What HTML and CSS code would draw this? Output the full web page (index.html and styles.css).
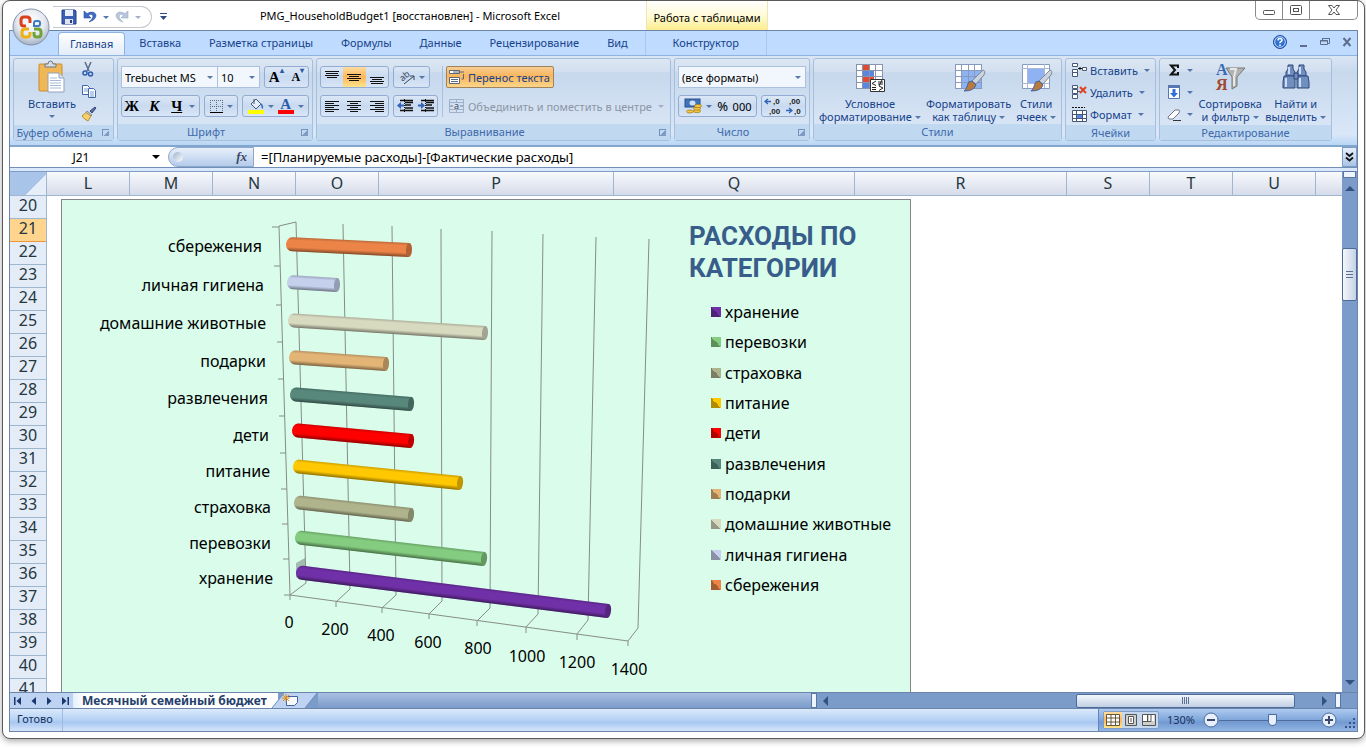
FILE: index.html
```html
<!DOCTYPE html>
<html lang="ru">
<head>
    <meta charset="UTF-8">
    <meta name="viewport" content="width=device-width, initial-scale=1.0">
    <title>PMG_HouseholdBudget1 - Microsoft Excel</title>
    <link rel="stylesheet" href="styles.css">
</head>
<body>

<div class="window">
    <button class="office" aria-label="Office">
        <svg width="38" height="38" viewBox="0 0 38 38">
            <defs>
                <radialGradient id="orb" cx="50%" cy="35%" r="65%">
                    <stop offset="0" stop-color="#fff"/>
                    <stop offset="0.6" stop-color="#e4e9f0"/>
                    <stop offset="1" stop-color="#a3b0c4"/>
                </radialGradient>
            </defs>
            <circle cx="19" cy="19" r="18" fill="url(#orb)" stroke="#8592a8"/>
            <g fill="none" stroke-width="3">
                <path d="M18 15v-3q0-3-3-3h-3q-3 0-3 3v3q0 3 3 3h2" stroke="#d8411c"/>
                <path d="M17 21h-4q-3 0-3 3v2q0 3 3 3h2q3 0 3-3v-2" stroke="#eeb111"/>
                <path d="M22 24v2q0 3 3 3h1q3 0 3-3v-2q0-3-3-3h-4" stroke="#6fa33a"/>
                <path d="M22 18h4q2 0 2-2v-1q0-2-2-2h-2q-2 0-2 2z" stroke="#3d7cc0" stroke-width="2"/>
            </g>
        </svg>
    </button>

    <header class="title-bar">
        <div class="quick">
            <button aria-label="Сохранить"><svg width="16" height="16" viewBox="0 0 16 16"><path d="M1 1h13l1 1v13H1z" fill="#3b5fb5" stroke="#243f87"/><path d="M4 1h8v6H4z" fill="#e8eefb"/><path d="M4 10h8v5H4z" fill="#dfe4ee"/><path d="M9 11h2v3H9z" fill="#243f87"/></svg></button>
            <button aria-label="Отменить"><svg width="14" height="14" viewBox="0 0 14 14"><path d="M1 1v7h7L5.500 5.500Q9 3 10 6q0 3-4 6 7-2 7-7Q11 0 4 3.500z" fill="#3d6cc7" stroke="#2a4f9e" stroke-width=".6"/></svg></button>
            <i class="arrow"></i>
            <button aria-label="Вернуть"><svg width="14" height="14" viewBox="0 0 14 14"><path d="M13 1v7H6l2.500-2.500Q5 3 4 6q0 3 4 6-7-2-7-7Q3 0 10 3.500z" fill="#b9c6dc" stroke="#98a9c6" stroke-width=".6"/></svg></button>
            <i class="arrow pale"></i>
        </div>
        <button class="quick-more" aria-label="Настройка панели"><svg width="7" height="7" viewBox="0 0 7 7"><path d="M0 .5h7" stroke="#2d4b80"/><path d="M0 3h7L3.500 7z" fill="#2d4b80"/></svg></button>
        <h1>PMG_HouseholdBudget1 [восстановлен] - Microsoft Excel</h1>
        <div class="context-title">Работа с таблицами</div>
        <div class="caption">
            <button aria-label="Свернуть"><svg width="14" height="12" viewBox="0 0 14 12"><rect x="1.500" y="6.500" width="11" height="4" rx="1" fill="#fff" stroke="#555"/></svg></button>
            <button aria-label="Развернуть"><svg width="14" height="12" viewBox="0 0 14 12"><rect x="1.500" y="1.500" width="11" height="9" rx="1" fill="#fff" stroke="#555"/><rect x="4.500" y="4.500" width="5" height="3" fill="#fff" stroke="#555"/></svg></button>
            <button aria-label="Закрыть"><svg width="14" height="12" viewBox="0 0 14 12"><path d="M1.500 1.500h3.500l2 2.500 2-2.500h3.500L9 6l3.500 4.500H9L7 8l-2 2.500H1.500L5 6z" fill="#fff" stroke="#555"/></svg></button>
        </div>
    </header>

    <div class="app">
        <nav class="tabs">
            <a href="#" class="tab active">Главная</a>
            <a href="#" class="tab">Вставка</a>
            <a href="#" class="tab">Разметка страницы</a>
            <a href="#" class="tab">Формулы</a>
            <a href="#" class="tab">Данные</a>
            <a href="#" class="tab">Рецензирование</a>
            <a href="#" class="tab">Вид</a>
            <a href="#" class="tab context">Конструктор</a>
            <div class="doc-buttons">
                <button aria-label="Справка"><svg width="14" height="14" viewBox="0 0 14 14"><circle cx="7" cy="7" r="6.500" fill="#2f6fd0" stroke="#1e4f9e"/><circle cx="7" cy="7" r="5.300" fill="none" stroke="#bcd8fb"/><path d="M5 5.500q0-2 2-2t2 1.800q0 1-2 2v1" fill="none" stroke="#fff" stroke-width="1.500"/><path d="M6.200 9.500h1.600V11H6.200z" fill="#fff"/></svg></button>
                <button aria-label="Свернуть окно"><svg width="9" height="12" viewBox="0 0 9 12"><path d="M1 10h7" stroke="#5d6f8c" stroke-width="2"/></svg></button>
                <button aria-label="Восстановить окно"><svg width="10" height="10" viewBox="0 0 10 10"><path d="M2.500 3V1.500h7v5H8" fill="none" stroke="#5d6f8c"/><path d="M.5 3.500h7v4h-7z" fill="none" stroke="#5d6f8c"/><path d="M0 4h8M2 1.500h8" stroke="#5d6f8c"/></svg></button>
                <button aria-label="Закрыть книгу"><svg width="10" height="10" viewBox="0 0 10 10"><path d="M1.500 1l7 8M8.500 1l-7 8" stroke="#5d6f8c" stroke-width="2"/></svg></button>
            </div>
        </nav>

        <div class="ribbon">
            <section class="group g-clip">
                <div class="group-body">
                    <button class="big">
                        <svg width="28" height="32" viewBox="0 0 28 32"><rect x="1" y="3" width="23" height="27" rx="1" fill="#efb755" stroke="#c98c2c"/><path d="M7 6V3h3q0-3 2.500-3T15 3h3v3z" fill="#d8dde4" stroke="#6c7685"/><path d="M10 12h11l5 5v14H10z" fill="#fff" stroke="#8fa1bd"/><path d="M21 12v5h5" fill="#dbe5f3" stroke="#8fa1bd"/><path d="M12 17h7M12 19.500h11M12 22h11M12 24.500h11M12 27h11" stroke="#a9bad5"/></svg>
                        <span>Вставить</span>
                        <i class="arrow"></i>
                    </button>
                    <div class="stack">
                        <button aria-label="Вырезать"><svg width="14" height="16" viewBox="0 0 14 16"><path d="M4 0l4 9M10 0L6 9" stroke="#5b6c8c" stroke-width="1.500"/><circle cx="4" cy="11" r="2" fill="none" stroke="#2b5cae" stroke-width="1.500"/><circle cx="9.500" cy="12" r="2" fill="none" stroke="#2b5cae" stroke-width="1.500"/></svg></button>
                        <button aria-label="Копировать"><svg width="16" height="16" viewBox="0 0 16 16"><path d="M1.500 1.500h5l2 2v7h-7z" fill="#fff" stroke="#3d66ae"/><path d="M3 5h4M3 7h4" stroke="#7f9ccf"/><path d="M7.500 4.500h5l2 2v7h-7z" fill="#fff" stroke="#3d66ae"/><path d="M9 8h4M9 10h4M9 12h4" stroke="#7f9ccf"/></svg></button>
                        <button aria-label="Формат по образцу"><svg width="16" height="16" viewBox="0 0 16 16"><path d="M9 5l5-4 1 1-4 5z" fill="#5b6fa3" stroke="#37497c"/><path d="M6 5l5 4-1 1-5-3z" fill="#c7cfde" stroke="#7b88a2"/><path d="M5 6.500L10 10l-3 5q-3-1-6-5z" fill="#f6d16b" stroke="#bb8f2e"/></svg></button>
                    </div>
                </div>
                <h2>Буфер обмена</h2><i class="launch"></i>
            </section>

            <section class="group g-font">
                <div class="group-body rows">
                    <div class="line">
                        <div class="joined">
                            <select class="font-name" aria-label="Шрифт"><option>Trebuchet MS</option></select>
                            <select class="font-size" aria-label="Размер шрифта"><option>10</option></select>
                        </div>
                        <div class="btns wide">
                            <button class="serif" aria-label="Увеличить размер">A<sup>▴</sup></button>
                            <button class="serif small" aria-label="Уменьшить размер">A<sup>▾</sup></button>
                        </div>
                    </div>
                    <div class="line">
                        <div class="btns biu">
                            <button class="serif">Ж</button>
                            <button class="serif"><em>К</em></button>
                            <button class="serif"><u>Ч</u></button>
                            <i class="arrow"></i>
                        </div>
                        <div class="btns">
                            <button aria-label="Границы"><svg width="15" height="15" viewBox="0 0 15 15"><path d="M1 1.500h13M1 7.500h13M1.500 1v12M7.500 1v12M13.500 1v12" stroke="#5e6b80" stroke-dasharray="1 1"/><path d="M1 13.500h13" stroke="#000"/></svg></button>
                            <i class="arrow"></i>
                        </div>
                        <div class="btns wide">
                            <button aria-label="Цвет заливки"><svg width="16" height="16" viewBox="0 0 16 16"><path d="M3 6l5-5 5 5-5 5z" fill="#e7edf7" stroke="#49597a"/><path d="M6 1v5" stroke="#49597a"/><path d="M12 5q4 1 3 6-2-1-2-4z" fill="#3c74c9"/><path d="M0 12h16v4H0z" fill="#ff0"/></svg></button>
                            <i class="arrow"></i>
                            <button aria-label="Цвет текста" class="serif color-a">A</button>
                            <i class="arrow"></i>
                        </div>
                    </div>
                </div>
                <h2>Шрифт</h2><i class="launch"></i>
            </section>

            <section class="group g-align">
                <div class="group-body">
                    <div class="rows">
                        <div class="line">
                            <div class="btns trio">
                                <button aria-label="По верхнему краю"><svg width="16" height="16" viewBox="0 0 16 16"><path d="M1 2.500h14M2 4.500h12M1 6.500h14M3 8.500h10" stroke="#111"/></svg></button>
                                <button class="on" aria-label="По середине"><svg width="16" height="16" viewBox="0 0 16 16"><path d="M1 5.500h14M3 7.500h10M1 9.500h14M3 11.500h10" stroke="#111"/></svg></button>
                                <button aria-label="По нижнему краю"><svg width="16" height="16" viewBox="0 0 16 16"><path d="M1 8.500h14M3 10.500h10M1 12.500h14M2 14.500h12" stroke="#111"/></svg></button>
                            </div>
                            <div class="btns">
                                <button aria-label="Ориентация"><svg width="18" height="16" viewBox="0 0 18 16"><text x="2" y="10" class="glyph" transform="rotate(-40 7 8)">ab</text><path d="M6 15L16 7M16 7v4M16 7h-4" fill="none" stroke="#39465c"/></svg></button>
                                <i class="arrow"></i>
                            </div>
                        </div>
                        <div class="line">
                            <div class="btns trio">
                                <button aria-label="По левому краю"><svg width="16" height="16" viewBox="0 0 16 16"><path d="M1 3.500h14M1 5.500h9M1 7.500h14M1 9.500h9M1 11.500h14M1 13.500h9" stroke="#111"/></svg></button>
                                <button aria-label="По центру"><svg width="16" height="16" viewBox="0 0 16 16"><path d="M1 3.500h14M4 5.500h8M1 7.500h14M4 9.500h8M1 11.500h14M4 13.500h8" stroke="#111"/></svg></button>
                                <button aria-label="По правому краю"><svg width="16" height="16" viewBox="0 0 16 16"><path d="M1 3.500h14M6 5.500h9M1 7.500h14M6 9.500h9M1 11.500h14M6 13.500h9" stroke="#111"/></svg></button>
                            </div>
                            <div class="btns duo">
                                <button aria-label="Уменьшить отступ"><svg width="16" height="16" viewBox="0 0 16 16"><path d="M3 2.500h13M8 4.500h8M8 7h6M3 12.500h13M8 10h8" stroke="#111" stroke-width="1.500"/><path d="M7.500 1v14" stroke="#111" stroke-dasharray="1 1"/><path d="M0 7.500L4 4v2.500h3v2H4V11z" fill="#3163b8"/></svg></button>
                                <button aria-label="Увеличить отступ"><svg width="16" height="16" viewBox="0 0 16 16"><path d="M3 2.500h13M8 4.500h8M8 7h6M3 12.500h13M8 10h8" stroke="#111" stroke-width="1.500"/><path d="M7.500 1v14" stroke="#111" stroke-dasharray="1 1"/><path d="M7 7.500L3 4v2.500H0v2h3V11z" fill="#3163b8"/></svg></button>
                            </div>
                        </div>
                    </div>
                    <div class="rows split">
                        <button class="labeled wrap"><svg width="17" height="16" viewBox="0 0 17 16"><path d="M1.500 1.500h10v3h-10zM1.500 8.500h10v6h-10z" fill="#fff" stroke="#5d6677"/><path d="M3 10.500h7M3 12.500h7M5 3h11M15.500 5v5h-2" fill="none" stroke="#5d6677"/></svg>Перенос текста</button>
                        <button class="labeled" disabled><svg width="17" height="16" viewBox="0 0 17 16"><path d="M1.500 1.500h14v13h-14zM1.500 4.500h14M1.500 11.500h14M8.500 1v3M8.500 12v3" fill="none" stroke="#9fb0c8"/><path d="M2 8h3M12 8h3" stroke="#6c7c95"/><text x="6" y="11" class="glyph">a</text></svg>Объединить и поместить в центре<i class="arrow pale"></i></button>
                    </div>
                </div>
                <h2>Выравнивание</h2><i class="launch"></i>
            </section>

            <section class="group g-num">
                <div class="group-body rows">
                    <div class="line"><select class="format" aria-label="Числовой формат"><option>(все форматы)</option></select></div>
                    <div class="line">
                        <div class="btns money">
                            <button aria-label="Денежный формат"><svg width="18" height="16" viewBox="0 0 18 16"><rect x="1" y="1" width="15" height="8" fill="#3f74bd" stroke="#2a4f8b"/><ellipse cx="8.500" cy="5" rx="3" ry="2.500" fill="#cfe0f5"/><g fill="#f4c542" stroke="#9d7416" stroke-width=".7"><ellipse cx="13" cy="13" rx="3.500" ry="1.700"/><ellipse cx="13" cy="10.500" rx="3.500" ry="1.700"/><ellipse cx="14" cy="8" rx="3.500" ry="1.700"/><ellipse cx="6" cy="13.500" rx="3.500" ry="1.500"/></g></svg></button>
                            <i class="arrow"></i>
                            <button class="percent">%</button>
                            <button class="zeros">000</button>
                        </div>
                        <div class="btns duo">
                            <button aria-label="Увеличить разрядность"><svg width="18" height="20" viewBox="0 0 18 20"><text x="9" y="8" class="digits">,0</text><text x="5" y="18" class="digits">,00</text><path d="M1 5.500h6M4 3L1 5.500 4 8" fill="none" stroke="#2d63b8" stroke-width="1.300"/></svg></button>
                            <button aria-label="Уменьшить разрядность"><svg width="18" height="20" viewBox="0 0 18 20"><text x="4" y="8" class="digits">,00</text><text x="9" y="18" class="digits">,0</text><path d="M1 14.500h6M4 12l3 2.500L4 17" fill="none" stroke="#2d63b8" stroke-width="1.300"/></svg></button>
                        </div>
                    </div>
                </div>
                <h2>Число</h2><i class="launch"></i>
            </section>

            <section class="group g-styles">
                <div class="group-body">
                    <button class="big">
                        <svg width="32" height="32" viewBox="0 0 32 32"><path d="M2 3h26v25H2z" fill="#fff"/><path d="M9 3h6v6H9zM9 15h11v6H9z" fill="#e2492f"/><path d="M9 9h11v6H9zM9 21h6v6H9z" fill="#5a86e0"/><path d="M2.500 3v25M8.500 3v25M15.500 3v25M21.500 3v25M28.500 3v25M2 3.500h27M2 9.500h27M2 15.500h27M2 21.500h27M2 27.500h27" stroke="#8794ad" fill="none"/><path d="M16.500 18.500h14v12h-14z" fill="#fff" stroke="#333"/><path d="M22 20l-4 2.500 4 2M18 26.500h4M18 28.500h4M24 21h5M24 23h5M28 19l-3 6M25 25l4 2-4 2.500" fill="none" stroke="#222"/></svg>
                        <span>Условное<br>форматирование<i class="arrow"></i></span>
                    </button>
                    <button class="big">
                        <svg width="32" height="32" viewBox="0 0 32 32"><path d="M2 3h26v24H2z" fill="#fff"/><path d="M9 9h19v18H9z" fill="#8fb2f2"/><path d="M2.500 3v24M8.500 3v24M15.500 3v24M21.500 3v24M28.500 3v24M2 3.500h27M2 9.500h27M2 15.500h27M2 21.500h27M2 27.500h27" stroke="#8799bd" fill="none"/><path d="M30 9q3 1 1 5l-8 9-4-3z" fill="#cdd3de" stroke="#7c889c"/><path d="M19 20l4 4q-2 6-12 6 3-2 3.500-6t4.500-4z" fill="#b97a3c" stroke="#3d64a5"/></svg>
                        <span>Форматировать<br>как таблицу<i class="arrow"></i></span>
                    </button>
                    <button class="big">
                        <svg width="32" height="32" viewBox="0 0 32 32"><path d="M2.500 3.500h27v24h-27z" fill="#fff" stroke="#8799bd"/><path d="M7 8h18v15H7z" fill="#8fb2f2"/><path d="M7.500 3v24M24.500 3v24M2 7.500h27M2 22.500h27" stroke="#a9b9d6"/><path d="M30 9q3 1 1 5l-8 9-4-3z" fill="#cdd3de" stroke="#7c889c"/><path d="M19 20l4 4q-2 6-12 6 3-2 3.500-6t4.500-4z" fill="#b97a3c" stroke="#3d64a5"/></svg>
                        <span>Стили<br>ячеек<i class="arrow"></i></span>
                    </button>
                </div>
                <h2>Стили</h2>
            </section>

            <section class="group g-cells">
                <div class="group-body stack">
                    <button class="labeled"><svg width="16" height="16" viewBox="0 0 16 16"><path d="M1.500 1.500h5v3h-5zM1.500 7.500h5v3h-5zM1.500 10.500h5v4h-5zM11.500 5.500h4v3h-4z" fill="#fff" stroke="#46587a"/><path d="M7 6.500h4M9 5v3" stroke="#111"/></svg>Вставить<i class="arrow"></i></button>
                    <button class="labeled"><svg width="16" height="16" viewBox="0 0 16 16"><path d="M1.500 1.500h5v3h-5zM1.500 5.500h5v4h-5zM1.500 10.500h5v4h-5z" fill="#fff" stroke="#46587a"/><path d="M6 7.500h3" stroke="#46587a"/><path d="M9 3l6 6M15 3L9 9" stroke="#e2401f" stroke-width="2"/></svg>Удалить<i class="arrow"></i></button>
                    <button class="labeled"><svg width="16" height="16" viewBox="0 0 16 16"><path d="M1 1.500h13" stroke="#111" stroke-dasharray="2 1"/><path d="M1.500 4.500h14v11h-14z" fill="#fff"/><path d="M6 9h5v3H6z" fill="#5a86e0"/><path d="M1.500 4.500h14v11h-14zM5.500 4v11M11.500 4v11M1 8.500h14M1 12.500h14" fill="none" stroke="#46587a"/></svg>Формат<i class="arrow"></i></button>
                </div>
                <h2>Ячейки</h2>
            </section>

            <section class="group g-edit">
                <div class="group-body">
                    <div class="stack">
                        <button class="labeled" aria-label="Сумма"><svg width="14" height="16" viewBox="0 0 14 16"><path d="M11 6V3.500H4L8 8l-4 4.500h7V10" fill="none" stroke="#111" stroke-width="2"/></svg><i class="arrow"></i></button>
                        <button class="labeled" aria-label="Заполнить"><svg width="14" height="16" viewBox="0 0 14 16"><path d="M1.500 1.500h11v13h-11z" fill="#fff" stroke="#5876b4"/><path d="M1 1h12v3H1z" fill="#5876b4"/><path d="M5.500 5h3v4H11l-4 4.500L3 9h2.500z" fill="#2f6fd8"/></svg><i class="arrow"></i></button>
                        <button class="labeled" aria-label="Очистить"><svg width="14" height="16" viewBox="0 0 14 16"><path d="M1 11l7-7h4q1 1 0 3l-6 6H2q-1-1-1-2z" fill="#fff" stroke="#6a7486"/><path d="M6 14.500h8" stroke="#333"/></svg><i class="arrow"></i></button>
                    </div>
                    <button class="big">
                        <svg width="32" height="32" viewBox="0 0 32 32"><path d="M12 7h19l-8 9v9l-5 3V16z" fill="#b3b3b3" stroke="#777"/><path d="M16 8h6l-2 8v9" fill="none" stroke="#e8e8e8" stroke-width="2"/><text x="2" y="14" class="sort-a">А</text><text x="2" y="29" class="sort-z">Я</text></svg>
                        <span>Сортировка<br>и фильтр<i class="arrow"></i></span>
                    </button>
                    <button class="big">
                        <svg width="32" height="32" viewBox="0 0 32 32"><g fill="#6f8fc0" stroke="#2e4778"><path d="M8 4h5v4l2 3v4H6v-4l2-3zM19 4h5v4l2 3v4h-9v-4l2-3z"/><path d="M4 15h11v12H3v-6zM17 15h11l1 6v6H17z"/><path d="M14 12h4v6h-4z"/></g><path d="M6 17v9M20 17v9M9 6v7M20 6v7" stroke="#cddcf3" stroke-width="2"/></svg>
                        <span>Найти и<br>выделить<i class="arrow"></i></span>
                    </button>
                </div>
                <h2>Редактирование</h2>
            </section>
        </div>

        <div class="formula-bar">
            <div class="name-box"><input type="text" value="J21" aria-label="Имя"><i class="arrow dark"></i></div>
            <button class="fx" aria-label="Вставить функцию"><span class="knob"></span><span><i>f</i>x</span></button>
            <input class="formula" type="text" value="=[Планируемые расходы]-[Фактические расходы]" aria-label="Строка формул">
            <button class="expand" aria-label="Развернуть строку формул"><svg width="9" height="10" viewBox="0 0 9 10"><path d="M1 1l3.500 3L8 1M1 5.500l3.500 3 3.500-3" fill="none" stroke="#111" stroke-width="1.800"/></svg></button>
        </div>

        <main class="workbook">
            <div class="sheet">
                <div class="col-heads">
                    <span class="corner"></span>
                    <span class="c-std">L</span><span class="c-std">M</span><span class="c-std">N</span><span class="c-std">O</span>
                    <span class="c-p">P</span><span class="c-q">Q</span><span class="c-r">R</span>
                    <span class="c-std">S</span><span class="c-std">T</span><span class="c-std">U</span><span class="c-rest"></span>
                </div>
                <div class="cells">
                    <div class="row-heads" id="rowHeads"></div>
                    <div class="chart">
                        <svg class="plot" width="620" height="494" viewBox="62 200 620 494">
                            <defs>
                                <linearGradient id="shade" x1="0" y1="0" x2="0" y2="1">
                                    <stop offset="0" stop-color="#000" stop-opacity=".2"/>
                                    <stop offset=".2" stop-color="#000" stop-opacity="0"/>
                                    <stop offset=".7" stop-color="#000" stop-opacity="0"/>
                                    <stop offset="1" stop-color="#000" stop-opacity=".45"/>
                                </linearGradient>
                            </defs>
                            <!-- walls, floor and grid -->
                            <g class="grid">
                                <path d="M290 600V595L279 226L296 222L306 583L290 595L628 641"/>
                                <path d="M343 224L350 589L336 602V607"/>
                                <path d="M392 226L396 595L382 608V613"/>
                                <path d="M441 229L442 601L429 614V619"/>
                                <path d="M492 231L490 608L477 621V626"/>
                                <path d="M543 234L538 614L526 627V633"/>
                                <path d="M596 237L588 620L577 634V640"/>
                                <path d="M649 239L638 628L628 641V646"/>
                                <path d="M272 227h7M274 266h6M276 305h5M277 342h6M278 379h6M279 416h6M280 453h6M281 489h6M282 524h6M283 559h6M284 595h6"/>
                            </g>
                            <path d="M296 563l9-5v10l-9 10z" fill="#000" opacity=".25"/>
                            <g id="bars"></g>
                            <g class="axis">
                                <text x="289" y="628">0</text>
                                <text x="335" y="635">200</text>
                                <text x="381" y="641">400</text>
                                <text x="428" y="648">600</text>
                                <text x="478" y="654">800</text>
                                <text x="527" y="662">1000</text>
                                <text x="577" y="668">1200</text>
                                <text x="629" y="675">1400</text>
                            </g>
                        </svg>
                        <div class="chart-side">
                            <h2>РАСХОДЫ ПО КАТЕГОРИИ</h2>
                            <ul class="legend" id="legend"></ul>
                        </div>
                    </div>
                </div>
            </div>
            <div class="vscroll">
                <span class="split-box"></span>
                <i class="tri up"></i>
                <span class="vthumb"></span>
                <i class="tri down"></i>
            </div>
        </main>

        <div class="sheet-bar">
            <div class="sheet-nav">
                <button aria-label="Первый лист"><svg width="8" height="8" viewBox="0 0 8 8"><path d="M0 0h1.500v8H0zM7 0v8L2.500 4z"/></svg></button>
                <button aria-label="Предыдущий лист"><svg width="8" height="8" viewBox="0 0 8 8"><path d="M6 0v8L1.500 4z"/></svg></button>
                <button aria-label="Следующий лист"><svg width="8" height="8" viewBox="0 0 8 8"><path d="M2 0v8l4.500-4z"/></svg></button>
                <button aria-label="Последний лист"><svg width="8" height="8" viewBox="0 0 8 8"><path d="M6.500 0H8v8H6.500zM1 0v8l4.500-4z"/></svg></button>
            </div>
            <a href="#" class="sheet-tab">Месячный семейный бюджет</a>
            <button class="new-sheet" aria-label="Вставить лист"><svg width="46" height="15" viewBox="0 0 46 15"><path d="M0 15L12 0h33L33 15z" fill="#bdd3f1"/><path d="M0 15L12 0M33 15L45 0" stroke="#6f8fbf"/><path d="M14.500 3.500h11v6l-3 3h-8z" fill="#f5f9ff" stroke="#47619a"/><path d="M14 1v8M10 5h8M11 2l6 6M17 2l-6 6" stroke="#e08d1c"/></svg></button>
            <span class="filler"></span>
            <span class="splitter"></span>
            <div class="hscroll">
                <i class="tri left"></i>
                <span class="hthumb"></span>
                <i class="tri right"></i>
            </div>
            <span class="splitter"></span>
            <span class="corner-box"></span>
        </div>

        <footer class="status">
            <span class="ready">Готово</span>
            <div class="status-right">
                <div class="views">
                    <button class="on" aria-label="Обычный"><svg width="14" height="12" viewBox="0 0 14 12"><path d="M.5.5h13v11H.5zM5 0v12M9.500 0v12M0 4h14M0 8h14" fill="#fff" stroke="#66563a"/></svg></button>
                    <button aria-label="Разметка страницы"><svg width="14" height="12" viewBox="0 0 14 12"><path d="M1.500.5h11v11h-11z" fill="#cfcfcf" stroke="#555"/><path d="M4.500 2.500h5v7h-5z" fill="#fff" stroke="#555"/><path d="M6 5h2M6 7h2" stroke="#555"/></svg></button>
                    <button aria-label="Страничный"><svg width="14" height="12" viewBox="0 0 14 12"><path d="M.5.5h13v11H.5z" fill="#cfcfcf" stroke="#555"/><path d="M1 1h5v6H1zM7 1h5v6H7z" fill="#fff"/><path d="M0 7.500h9V0M5.500 0v7" fill="none" stroke="#555"/></svg></button>
                </div>
                <label for="zoom">130%</label>
                <button class="round" aria-label="Уменьшить масштаб"><svg width="16" height="16" viewBox="0 0 16 16"><circle cx="8" cy="8" r="7" fill="#e6effb" stroke="#4c6a9c"/><path d="M4 8h8" stroke="#3a4a68" stroke-width="2"/></svg></button>
                <input type="range" id="zoom" min="0" max="200" value="106">
                <button class="round" aria-label="Увеличить масштаб"><svg width="16" height="16" viewBox="0 0 16 16"><circle cx="8" cy="8" r="7" fill="#e6effb" stroke="#4c6a9c"/><path d="M4 8h8M8 4v8" stroke="#3a4a68" stroke-width="2"/></svg></button>
                <svg class="grip" width="11" height="11" viewBox="0 0 11 11"><path d="M8 0h2v2H8zM4 4h2v2H4zM8 4h2v2H8zM0 8h2v2H0zM4 8h2v2H4zM8 8h2v2H8z" fill="#35558c"/></svg>
            </div>
        </footer>
    </div>
</div>

<script>
    // x1/y1 - left end of the cylinder, x2/y2 - right end, tx/ty - label end
    const items = [
        { name: "хранение", color: "#7030a8", x1: 296, y1: 572, x2: 608, y2: 611, tx: 273, ty: 584 },
        { name: "перевозки", color: "#84cc80", x1: 295, y1: 537, x2: 484, y2: 559, tx: 271, ty: 549 },
        { name: "страховка", color: "#b0b48c", x1: 294, y1: 502, x2: 411, y2: 515, tx: 271, ty: 513 },
        { name: "питание", color: "#ffc800", x1: 293, y1: 466, x2: 460, y2: 483, tx: 270, ty: 477 },
        { name: "дети", color: "#ff0000", x1: 292, y1: 430, x2: 411, y2: 441, tx: 269, ty: 441 },
        { name: "развлечения", color: "#58887c", x1: 290, y1: 394, x2: 411, y2: 404, tx: 268, ty: 404 },
        { name: "подарки", color: "#e2b476", x1: 289, y1: 357, x2: 386, y2: 364, tx: 266, ty: 367 },
        { name: "домашние животные", color: "#d8dac0", x1: 288, y1: 320, x2: 485, y2: 333, tx: 266, ty: 329 },
        { name: "личная гигиена", color: "#c4d0ec", x1: 287, y1: 282, x2: 337, y2: 285, tx: 264, ty: 291 },
        { name: "сбережения", color: "#ec8448", x1: 286, y1: 244, x2: 409, y2: 250, tx: 262, ty: 252 }
    ];

    let bars = "";
    let legend = "";
    items.forEach(b => {
        const len = Math.hypot(b.x2 - b.x1, b.y2 - b.y1);
        const angle = Math.atan2(b.y2 - b.y1, b.x2 - b.x1) * 180 / Math.PI;
        const shape = `M6 -7H${len}V7H6A6 7 0 0 1 6 -7z`;
        bars += `<g transform="translate(${b.x1} ${b.y1}) rotate(${angle})">
            <path d="${shape}" fill="${b.color}"/><path d="${shape}" fill="url(#shade)"/>
            <ellipse cx="${len}" cy="0" rx="3" ry="7" fill="${b.color}"/>
            <ellipse cx="${len}" cy="0" rx="3" ry="7" fill="#000" opacity=".25"/></g>
            <text class="cat" x="${b.tx}" y="${b.ty}">${b.name}</text>`;
        legend += `<li><span class="key" style="background-color:${b.color}"></span>${b.name}</li>`;
    });
    document.getElementById("bars").innerHTML = bars;
    document.getElementById("legend").innerHTML = legend;

    let rows = "";
    for (let i = 20; i <= 41; i++) {
        rows += `<span class="${i === 21 ? "current" : ""}">${i}</span>`;
    }
    document.getElementById("rowHeads").innerHTML = rows;
</script>

</body>
</html>
```
FILE: styles.css
```css
* {
    box-sizing: border-box;
}
body {
    margin: 0;
    height: 100vh;
    padding: 0 1px 9px 2px;
    background: #fff;
    font-family: "Noto Sans", "Open Sans", sans-serif;
    font-size: 11px;
    color: #000;
}
button, input, select {
    font: inherit;
    color: inherit;
    margin: 0;
    padding: 0;
    border: none;
    background: none;
}
button {
    display: flex;
    align-items: center;
    justify-content: center;
    cursor: pointer;
}
a {
    color: inherit;
    text-decoration: none;
}
h1, h2, ul {
    margin: 0;
    padding: 0;
    font-weight: normal;
    font-size: inherit;
}
svg {
    display: block;
    flex: none;
    overflow: visible;
}
.window {
    position: relative;
    height: 100%;
    display: flex;
    flex-direction: column;
    padding: 0 6px 6px 6px;
    border: 1px solid #5a5a5a;
    border-radius: 8px;
    background: #fff;
    box-shadow: 0 2px 6px rgba(0, 0, 0, 0.35);
}
.app {
    flex: 1;
    min-height: 0;
    display: flex;
    flex-direction: column;
    border: 1px solid #6c86ab;
}
.arrow {
    flex: none;
    display: inline-block;
    border: 3px solid transparent;
    border-top-color: #5476a8;
    border-bottom: none;
}
.arrow.pale {
    border-top-color: #a3b1c8;
}
.arrow.dark {
    border-width: 4px 4px 0;
    border-top-color: #000;
}

/* title bar */
.office {
    position: absolute;
    left: 9px;
    top: 7px;
    border-radius: 50%;
}
.title-bar {
    flex: none;
    display: flex;
    height: 29px;
    padding-left: 44px;
}
.quick {
    display: flex;
    align-items: center;
    gap: 6px;
    width: 99px;
    height: 22px;
    margin-top: 5px;
    padding-left: 8px;
    border: 1px solid #c3c8d0;
    border-left: none;
    border-radius: 0 11px 11px 0;
}
.quick-more {
    width: 22px;
    height: 30px;
}
.title-bar h1 {
    width: 472px;
    line-height: 30px;
    text-align: center;
}
.context-title {
    width: 122px;
    padding-top: 5px;
    line-height: 24px;
    text-align: center;
    background: linear-gradient(#fff, #fffbd8 50%, #fdec8e);
    border: 1px solid #eee6b8;
    border-width: 0 1px;
}
.caption {
    display: flex;
    height: 19px;
    margin-left: auto;
    border: 1px solid #8a8a8a;
    border-top: none;
    border-radius: 0 0 5px 5px;
}
.caption button {
    width: 27px;
    border-right: 1px solid #8a8a8a;
}
.caption button:last-child {
    width: 47px;
    border-right: none;
}

/* ribbon tabs */
.tabs {
    flex: none;
    display: flex;
    height: 24px;
    padding-left: 48px;
    background: #bfdbff;
    color: #15428b;
}
.tab {
    padding: 0 14px;
    line-height: 24px;
}
.tab.active {
    height: 23px;
    margin-top: 1px;
    padding: 0 11px;
    line-height: 22px;
    border: 1px solid #8db2e3;
    border-bottom: none;
    border-radius: 4px 4px 0 0;
    background: linear-gradient(#fff, #e2ecf8);
}
.tab.context {
    width: 122px;
    margin-left: 3px;
    padding: 0;
    text-align: center;
    border: 1px solid #a9c6ec;
    border-width: 0 1px;
}
.doc-buttons {
    display: flex;
    align-items: center;
    gap: 12px;
    margin-left: auto;
    padding: 0 5px 3px 0;
}

/* ribbon */
.ribbon {
    flex: none;
    display: flex;
    gap: 3px;
    height: 92px;
    padding: 2px 3px 4px;
    border-top: 1px solid #8db2e3;
    border-bottom: 2px solid #83a6cf;
    background: linear-gradient(#dbe6f4, #c8d9ed 18%, #d9e7f8 88%, #b8d6f5);
}
.group {
    position: relative;
    display: flex;
    flex-direction: column;
    border: 1px solid #a5bfdd;
    border-radius: 3px;
    background: linear-gradient(#dde7f3, #d2dfef 16%, #c7d8ed 17%, #dce8f7);
}
.group h2 {
    height: 16px;
    line-height: 15px;
    text-align: center;
    color: #3e6aaa;
    background: #c1d8f1;
}
.group-body {
    flex: 1;
    display: flex;
    padding: 0 3px;
}
.launch {
    position: absolute;
    right: 4px;
    bottom: 4px;
    width: 7px;
    height: 7px;
    border: 1px solid #7492bd;
    border-width: 1px 0 0 1px;
    background: linear-gradient(135deg, transparent 50%, #7f9bc2 50%);
}
.g-clip { width: 101px; }
.g-clip h2 { padding-right: 18px; }
.g-font { width: 196px; }
.g-font h2 { padding-right: 18px; }
.g-align { width: 355px; }
.g-align h2 { padding-right: 18px; }
.g-num { width: 136px; }
.g-num h2 { padding-right: 18px; }
.g-styles { width: 249px; }
.g-cells { width: 91px; }
.g-edit { width: 173px; }

.rows {
    display: flex;
    flex-direction: column;
    justify-content: center;
    gap: 7px;
}
.line {
    display: flex;
    gap: 4px;
}
.btns {
    display: flex;
    align-items: center;
    justify-content: space-around;
    height: 22px;
    border: 1px solid #93add2;
    border-radius: 3px;
    background: linear-gradient(#dbe7f6, #c9daf0 50%, #d8e5f6);
}
.btns:has(> .arrow) {
    gap: 3px;
    padding: 0 4px;
}
.btns button {
    height: 20px;
}
.btns.trio {
    width: 69px;
}
.btns.trio button, .btns.duo button {
    flex: 1;
}
.btns.duo {
    width: 45px;
}
.btns.biu {
    width: 80px;
    padding-left: 0;
}
.btns.biu button {
    flex: 1;
}
.btns.wide {
    width: 67px;
}
.line:first-child .btns.wide {
    width: 45px;
}
.btns.money {
    width: 80px;
}
.btns .percent {
    font-size: 13px;
}
.on {
    background: linear-gradient(#fddca0, #fdb75a 50%, #fde48a);
}
select {
    appearance: none;
    height: 22px;
    padding: 0 3px;
    border: 1px solid #abc1de;
    background: #f2f7fd url("data:image/svg+xml,%3Csvg xmlns='http://www.w3.org/2000/svg' width='6' height='3'%3E%3Cpath d='M0 0h6L3 3z' fill='%235476a8'/%3E%3C/svg%3E") no-repeat right 4px center;
}
.joined {
    display: flex;
}
.font-name { width: 97px; }
.font-size { width: 42px; border-left: none; }
.format { width: 128px; }
.serif {
    font-family: "Liberation Serif", serif;
    font-weight: bold;
    font-size: 15px;
}
.serif.small {
    font-size: 12px;
}
.serif sup {
    font-size: 8px;
    color: #2d5aa3;
    align-self: flex-start;
    line-height: 8px;
}
.color-a {
    color: #2b5ca8;
    line-height: 12px;
    border-bottom: 4px solid #f00;
}
.btns button.color-a {
    width: 16px;
    height: 16px;
}
.glyph {
    font-size: 9px;
    fill: #39465c;
}
.digits {
    font-family: "Liberation Sans", sans-serif;
    font-size: 8px;
    font-weight: bold;
    fill: #222;
}
.sort-a, .sort-z {
    font-family: "Liberation Serif", serif;
    font-size: 16px;
    font-weight: bold;
    fill: #3a6ab4;
}
.sort-z {
    fill: #a04a32;
}
.rows.split {
    margin: 7px 0 7px 4px;
    padding-left: 3px;
    border-left: 1px solid #a9c0de;
    align-items: flex-start;
}
.labeled {
    gap: 3px;
    height: 22px;
    padding: 0 2px;
    color: #15428b;
    white-space: nowrap;
}
.labeled .arrow {
    margin-left: 3px;
}
.labeled.wrap {
    padding: 0 3px 0 1px;
    border: 1px solid #a0835a;
    border-radius: 2px;
    background: linear-gradient(#f6cd93, #f9b55c 45%, #fbd589);
}
.labeled:disabled {
    color: #8d96a5;
}
.stack {
    display: flex;
    flex-direction: column;
    justify-content: flex-start;
    align-items: flex-start;
}
.stack button {
    height: 22px;
}
.big {
    flex-direction: column;
    justify-content: flex-start;
    padding: 2px 0 0;
    line-height: 13px;
    color: #15428b;
    white-space: nowrap;
}
.big span {
    margin-top: 4px;
}
.big span .arrow {
    margin: 0 0 2px 3px;
}
.g-clip .group-body {
    padding-left: 14px;
    gap: 5px;
}
.g-clip .big > .arrow {
    margin-top: 5px;
}
.g-styles .group-body, .g-edit .group-body {
    justify-content: space-between;
    padding: 0 5px;
}

/* formula bar */
.formula-bar {
    flex: none;
    display: flex;
    height: 21px;
    background: #fff;
    border-bottom: 1px solid #7090b8;
    font-size: 13px;
}
.name-box {
    display: flex;
    align-items: center;
    width: 158px;
    padding-right: 5px;
    font-size: 12px;
}
.name-box input {
    width: 142px;
    text-align: center;
}
.fx {
    width: 86px;
    justify-content: space-between;
    padding: 0 6px 0 4px;
    border: 1px solid #8ba7cc;
    border-radius: 10px 0 0 10px;
    background: linear-gradient(#e8f0fa, #b4cbea);
    font-family: "Liberation Serif", serif;
    font-style: italic;
    font-weight: bold;
    color: #3c4a66;
}
.knob {
    width: 10px;
    height: 10px;
    border-radius: 50%;
    background: linear-gradient(135deg, #9fb3cf, #fff);
}
.formula {
    flex: 1;
    padding-left: 7px;
}
.expand {
    width: 15px;
    border: 1px solid #7f9cc4;
    background: linear-gradient(#e6f0fc, #a9c4e8);
}

/* sheet */
.workbook {
    flex: 1;
    min-height: 0;
    display: flex;
    border-top: 3px solid #d9e8fa;
    background: #fff;
}
.sheet {
    flex: 1;
    min-width: 0;
    display: flex;
    flex-direction: column;
    overflow: hidden;
}
.col-heads {
    flex: none;
    display: flex;
    height: 25px;
    border-top: 1px solid #7f9cc4;
    border-bottom: 1px solid #9eb6ce;
    background: linear-gradient(#f8fafd, #d5dbe9);
    font-size: 16px;
    line-height: 23px;
    text-align: center;
    color: #25373f;
}
.col-heads span {
    flex: none;
    border-right: 1px solid #9eb6ce;
}
.col-heads .corner {
    width: 37px;
    background: linear-gradient(135deg, #a9c4e9 65%, #e6eefa 65%);
}
.col-heads .c-std { width: 83px; }
.col-heads .c-p { width: 235px; }
.col-heads .c-q { width: 241px; }
.col-heads .c-r { width: 212px; }
.col-heads .c-rest { flex: 1; border: none; }
.cells {
    flex: 1;
    min-height: 0;
    display: flex;
    overflow: hidden;
}
.row-heads {
    flex: none;
    width: 37px;
    border-right: 1px solid #9eb6ce;
    background: #e4ecf7;
}
.row-heads span {
    display: block;
    height: 23px;
    border-bottom: 1px solid #9eb6ce;
    font-size: 16px;
    line-height: 18px;
    text-align: center;
    color: #25373f;
}
.row-heads .current {
    background: #ffd58d;
    border-color: #f29536;
}
.chart {
    flex: none;
    display: flex;
    width: 850px;
    height: 520px;
    margin: 3px 0 0 14px;
    border: 1px solid #868686;
    background: #d9fceb;
}
.grid {
    fill: none;
    stroke: #868d88;
}
.axis text, .cat {
    font-size: 16px;
}
.axis text {
    text-anchor: middle;
}
.cat {
    text-anchor: end;
}
.chart-side {
    padding-top: 20px;
    margin-left: 7px;
}
.chart-side h2 {
    width: 190px;
    font-family: Roboto, sans-serif;
    font-size: 26px;
    font-weight: bold;
    line-height: 32px;
    color: #385d8a;
}
.legend {
    display: grid;
    grid-auto-rows: 1fr;
    height: 303px;
    margin-top: 13px;
    padding-left: 22px;
    list-style: none;
    font-size: 16px;
}
.legend li {
    display: flex;
    align-items: center;
    gap: 4px;
    white-space: nowrap;
}
.key {
    width: 10px;
    height: 10px;
    background-image: linear-gradient(45deg, rgba(0, 0, 0, 0.3) 50%, transparent 50%);
}

/* scroll bars */
.vscroll {
    flex: none;
    display: flex;
    flex-direction: column;
    align-items: center;
    width: 15px;
    background: #7b9bc9;
}
.split-box {
    width: 13px;
    height: 7px;
    border: 1px solid #5877a8;
    background: #eef5fe;
}
.tri {
    flex: none;
    border: 5px solid transparent;
}
.tri.up { border-top: none; border-bottom-color: #34527f; margin-top: 8px; }
.tri.down { border-bottom: none; border-top-color: #34527f; margin: auto 0 7px; }
.tri.left { border-left: none; border-right-color: #34527f; margin-left: 6px; }
.tri.right { border-right: none; border-left-color: #34527f; margin-right: 8px; }
.vthumb {
    width: 15px;
    height: 53px;
    margin-top: 57px;
    border: 1px solid #4e6b98;
    border-radius: 2px;
    background: repeating-linear-gradient(#5d7193 0 1px, transparent 1px 3px) center / 7px 8px no-repeat, linear-gradient(90deg, #f3f7fc, #c4d2e6);
}
.sheet-bar {
    flex: none;
    display: flex;
    height: 17px;
    border-top: 1px solid #6c86ab;
    border-bottom: 1px solid #6c86ab;
    background: #7b9bc9;
}
.sheet-nav {
    display: flex;
    align-items: center;
    justify-content: space-around;
    width: 63px;
    background: #bdd3f1;
    fill: #17376e;
}
.sheet-tab {
    padding: 0 0 0 9px;
    background: linear-gradient(90deg, #e4effb, #fff 12px);
    font-size: 12px;
    font-weight: bold;
    line-height: 15px;
    color: #24406b;
}
.new-sheet {
    align-items: flex-start;
    padding-left: 5px;
    background: linear-gradient(90deg, #fff 11px, transparent 11px);
}
.filler {
    flex: 1;
    background: linear-gradient(#a9c0e2, #7b9bc9);
}
.splitter {
    width: 6px;
    border: 1px solid #5877a8;
    background: #eef5fe;
}
.hscroll {
    display: flex;
    align-items: center;
    width: 518px;
}
.hthumb {
    width: 219px;
    height: 14px;
    margin: 0 27px 0 auto;
    border: 1px solid #4e6b98;
    border-radius: 2px;
    background: repeating-linear-gradient(90deg, #5d7193 0 1px, transparent 1px 2px) center / 8px 7px no-repeat, linear-gradient(#f3f7fc, #c0cfe4);
}
.corner-box {
    width: 16px;
}

/* status bar */
.status {
    flex: none;
    display: flex;
    height: 22px;
    line-height: 20px;
    color: #15325f;
    background: linear-gradient(#dbe9fb, #b5d1f5 50%, #a8c7f0 60%, #d5e5fa);
}
.ready {
    width: 53px;
    padding-left: 7px;
    border-right: 1px solid #9dbbe2;
}
.status-right {
    display: flex;
    align-items: center;
    margin-left: auto;
    padding: 0 0 0 4px;
    border-left: 1px solid #5f86be;
    background: linear-gradient(#aecaf0, #7fa6da 50%, #7299d0 60%, #92b5e4);
}
.views {
    display: flex;
    margin-right: 8px;
    border: 1px solid #7f9cc8;
    border-radius: 2px;
    background: #c6d8f0;
}
.views button {
    width: 18px;
    height: 16px;
}
.round {
    margin-left: 8px;
}
#zoom + .round {
    margin-left: 0;
}
#zoom {
    appearance: none;
    width: 102px;
    height: 16px;
    background: linear-gradient(#4c6a9c, #4c6a9c) center / 100% 1px no-repeat;
}
#zoom::-webkit-slider-thumb {
    appearance: none;
    width: 9px;
    height: 12px;
    border: 1px solid #4c6a9c;
    border-radius: 1px 1px 5px 5px;
    background: #e6effb;
}
.grip {
    align-self: flex-end;
    margin: 0 1px 2px 8px;
}
```
